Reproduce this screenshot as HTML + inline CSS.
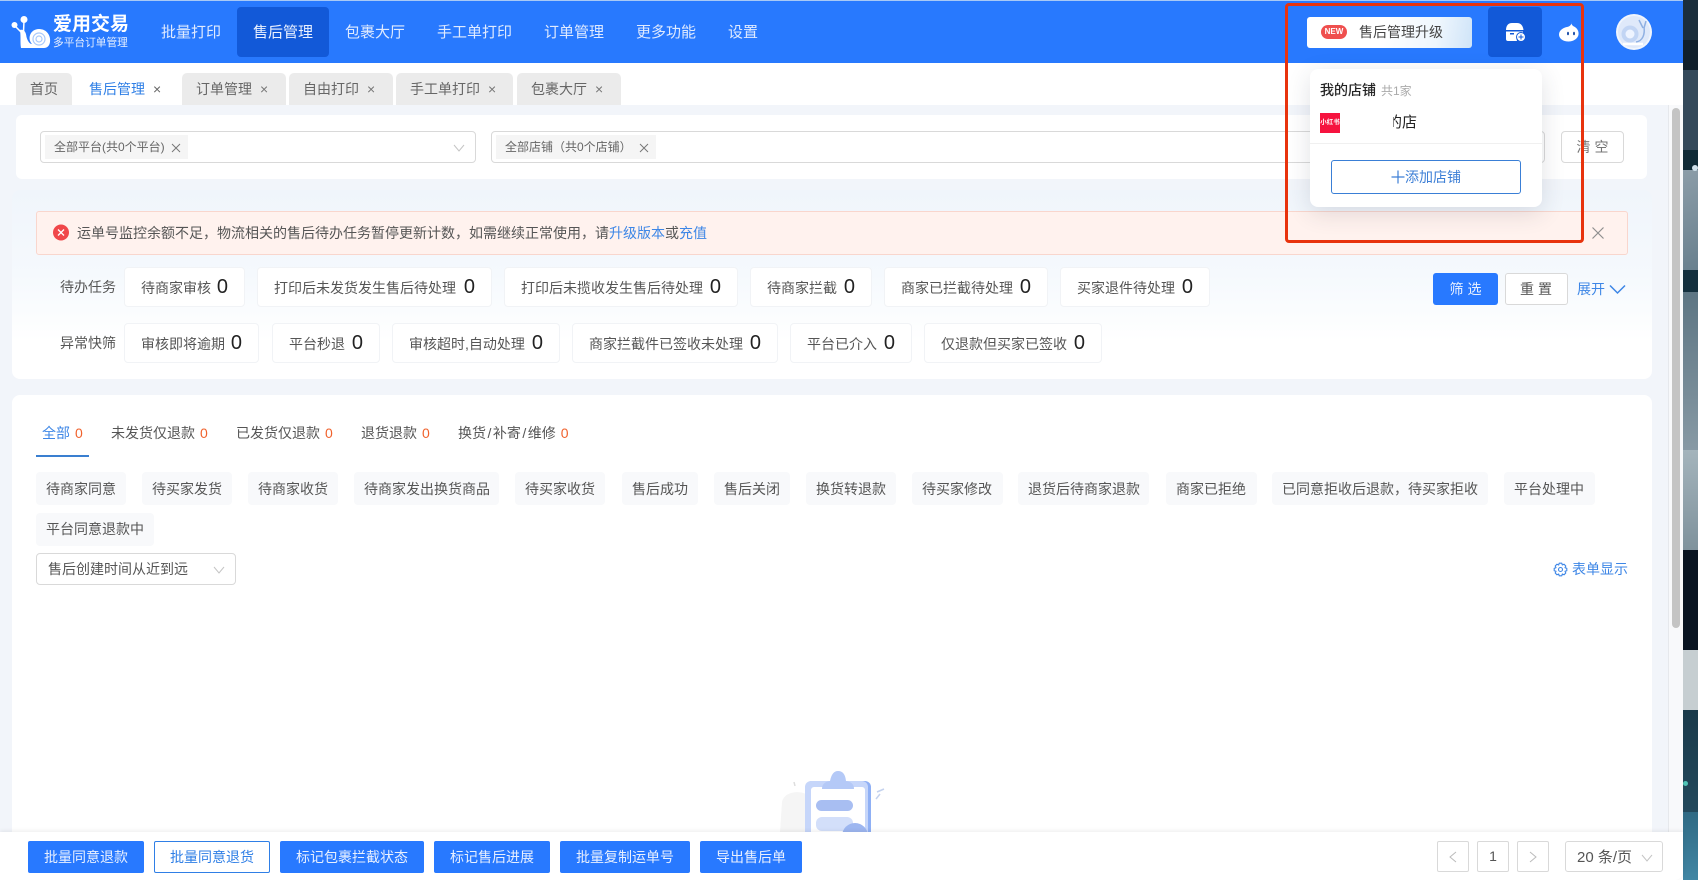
<!DOCTYPE html>
<html lang="zh"><head><meta charset="utf-8"><title>售后管理</title>
<style>
*{box-sizing:border-box}
html,body{margin:0;padding:0;width:1698px;height:880px;overflow:hidden;background:#fff;font-family:"Liberation Sans","Noto Sans CJK SC",sans-serif;font-size:14px;color:#555}
.a,.b,.tab,.chip,.c,.btn,.sel,.pg{position:absolute;white-space:nowrap}
.nav{position:absolute;top:8px;height:50px;line-height:50px;font-size:15px;color:#dfeaff;white-space:nowrap}
.tab{top:73px;height:32px;line-height:32px;background:#ebebeb;border-radius:5px 5px 0 0;color:#666;padding-left:14px;font-size:14px}
.tab i{position:absolute;top:0;font-style:normal;font-size:14px;color:#777}
.sel{background:#fff;border:1px solid #d9d9d9;border-radius:4px}
.tag{position:absolute;top:3px;height:24px;line-height:24px;background:#f5f5f5;font-size:12px;color:#666;padding-left:9px}
.tag svg{position:absolute;top:8px}
.c{height:40px;background:#fff;border:1px solid #f1f3f6;border-radius:4px;line-height:41px;padding-left:16px;font-size:14px;color:#555}
.c b{position:absolute;right:16px;top:0;font-weight:400;font-size:20px;color:#222;line-height:38px}
.r2{line-height:41px}
.lbl{position:absolute;left:60px;color:#555;font-size:14px;line-height:20px}
.st{position:absolute;top:423px;line-height:20px;font-size:14px;color:#555;white-space:nowrap}
.st u{text-decoration:none;color:#f0622d;margin-left:5px}
.st s{text-decoration:none;margin:0 1.500px}
.chip{height:33px;line-height:35px;background:#f8f9fb;border-radius:4px;padding-left:10px;font-size:14px;color:#555}
.btn{top:841px;height:32px;line-height:32px;text-align:center;background:#2879ff;color:#e8f0ff;border-radius:2px;font-size:14px}
.pg{top:841px;height:31px;border:1px solid #d9d9d9;border-radius:2px;background:#fff;text-align:center;line-height:29px;color:#555}
.w{position:absolute;left:1683px;width:15px}
</style></head><body>

<!-- wallpaper -->
<div class="w" style="top:0;height:40px;background:#1b2e3c"></div>
<div class="w" style="top:40px;height:30px;background:#101f2b"></div>
<div class="w" style="top:70px;height:80px;background:#34495a"></div>
<div class="w" style="top:150px;height:20px;background:#0f2a36"></div>
<div class="w" style="top:170px;height:100px;background:linear-gradient(160deg,#8c9da8,#69808e)"></div>
<div class="w" style="top:270px;height:22px;background:#14303e"></div>
<div class="w" style="top:292px;height:158px;background:linear-gradient(#5d7583,#8799a4)"></div>
<div class="w" style="top:450px;height:100px;background:linear-gradient(#a4b4bc,#7f929c)"></div>
<div class="w" style="top:550px;height:100px;background:#0a1522"></div>
<div class="w" style="top:650px;height:60px;background:#c6ced1"></div>
<div class="w" style="top:710px;height:102px;background:linear-gradient(#1a3a4a,#23495c)"></div>
<div class="w" style="top:812px;height:68px;background:linear-gradient(#2f6a84,#4186a4)"></div>
<div class="a" style="left:1683px;top:781px;width:5px;height:5px;border-radius:50%;background:#4fc3b5"></div>
<div class="a" style="left:1692px;top:165px;width:6px;height:6px;border-radius:50%;background:#cfe0ea"></div>

<!-- app bg -->
<div class="a" style="left:0;top:0;width:1683px;height:880px;background:#fff;border-radius:0 0 8px 0"></div>
<div class="a" style="left:0;top:105px;width:1668px;height:727px;background:#f2f5fa"></div>
<div class="a" style="left:1668px;top:105px;width:1px;height:727px;background:#e6e8ec"></div>
<div class="a" style="left:1669px;top:105px;width:14px;height:727px;background:#f8f9fb"></div>
<div class="a" style="left:1672px;top:108px;width:8px;height:520px;background:#c4c4c4;border-radius:4px"></div>

<!-- header -->
<div class="a" style="left:0;top:0;width:1683px;height:1px;background:#a9c9f5"></div>
<div class="a" style="left:0;top:1px;width:1683px;height:62px;background:#2879fe"></div>
<svg class="a" style="left:11px;top:15px" width="42" height="36" viewBox="0 0 42 36">
<circle cx="3.500" cy="10" r="3" fill="#fff"/><circle cx="13" cy="4.500" r="3.500" fill="#fff"/>
<path d="M4 11 L10 17 M13 6 L12.500 17" stroke="#fff" stroke-width="1.500" fill="none"/>
<path d="M9 15 C13 14 15 17 15.500 22 C17 27 19 29 21 29 C16 24 19 14 28 14 C36 14 40 21 39 27 C38.500 31 36 33 33 33 L10 33 C9 28 10 22 9 15Z" fill="#fff"/>
<circle cx="28" cy="24" r="6" fill="#fff" stroke="#a9c9fa" stroke-width="1.200"/><circle cx="28" cy="24" r="3" fill="none" stroke="#a9c9fa" stroke-width="1.200"/>
</svg>
<div class="a" style="left:53px;top:14px;font-size:19px;font-weight:700;color:#fff;line-height:22px;white-space:nowrap">爱用交易</div>
<div class="a" style="left:53px;top:36px;font-size:10.700px;color:#e6efff;line-height:14px;white-space:nowrap">多平台订单管理</div>
<div class="a" style="left:237px;top:7px;width:92px;height:50px;background:#1259d8;border-radius:4px"></div>
<div class="nav" style="left:161px">批量打印</div>
<div class="nav" style="left:253px;color:#eaf1ff">售后管理</div>
<div class="nav" style="left:345px">包裹大厅</div>
<div class="nav" style="left:437px">手工单打印</div>
<div class="nav" style="left:544px">订单管理</div>
<div class="nav" style="left:636px">更多功能</div>
<div class="nav" style="left:728px">设置</div>

<div class="a" style="left:1307px;top:17px;width:165px;height:31px;border-radius:3px;background:linear-gradient(100deg,#fff 0%,#fff 45%,#eef6fd 78%,#cfe4f8 100%)"></div>
<div class="a" style="left:1321px;top:25px;width:26px;height:14px;border-radius:7px;background:#ef4f4e;color:#fff;font-size:8px;font-weight:700;line-height:14px;text-align:center">NEW</div>
<div class="a" style="left:1359px;top:22px;font-size:14px;line-height:20px;color:#444;white-space:nowrap">售后管理升级</div>
<div class="a" style="left:1488px;top:7px;width:54px;height:50px;background:#1259d8;border-radius:4px"></div>
<svg class="a" style="left:1505px;top:22px" width="22" height="21" viewBox="0 0 22 21">
<path d="M1 8 C1 4 3 1 7 1 H12 C16 1 18 4 18.500 8Z" fill="#fff"/><path d="M1 9.500 H18 V11 A6 6 0 0 0 12 19 H3 Q1 19 1 17Z" fill="#fff"/>
<rect x="5" y="11" width="4" height="1.500" fill="#1259d8"/>
<circle cx="16" cy="15" r="4.500" fill="#fff" stroke="#1259d8"/><path d="M16 12.500 V17.500 M13.500 15 H18.500" stroke="#1259d8"/>
</svg>
<svg class="a" style="left:1559px;top:22px" width="20" height="20" viewBox="0 0 20 20">
<path d="M13 0 C12 2 13 3.500 15 4.500 C18 6 20 9 19.500 12.500 C19 16.500 14.500 19.500 9.500 19.500 C4 19.500 0 16.500 0 12.500 C0 8 5 5.500 8 5 C11 4.500 12.500 2.500 13 0Z" fill="#fff"/>
<ellipse cx="9" cy="11.500" rx="1" ry="1.800" fill="#1d4fa8"/><ellipse cx="15" cy="11.500" rx="1" ry="1.800" fill="#1d4fa8"/>
</svg>
<svg class="a" style="left:1616px;top:14px" width="36" height="36" viewBox="0 0 36 36">
<circle cx="18" cy="18" r="18" fill="#f0f5fd"/><circle cx="18" cy="18" r="16" fill="#dfe9fa"/><circle cx="14" cy="20" r="8.500" fill="#c2d5f4"/><circle cx="14" cy="20" r="4.500" fill="#eef4ff"/>
<path d="M20 28 C27 27 29 20 28 13 M23 6 L27 14 M30 7 L28 14" stroke="#8fb0e2" stroke-width="1.500" fill="none"/>
<path d="M7 30 H27" stroke="#fff" stroke-width="2.500"/>
</svg>

<!-- tabs -->
<div class="tab" style="left:16px;width:56px">首页</div>
<div class="tab" style="left:75px;width:104px;background:#fff;color:#2f7fe6">售后管理<i style="left:78px;color:#666">×</i></div>
<div class="tab" style="left:182px;width:104px">订单管理<i style="left:78px">×</i></div>
<div class="tab" style="left:289px;width:104px">自由打印<i style="left:78px">×</i></div>
<div class="tab" style="left:396px;width:117px">手工单打印<i style="left:92px">×</i></div>
<div class="tab" style="left:517px;width:104px">包裹大厅<i style="left:78px">×</i></div>

<!-- filter -->
<div class="a" style="left:16px;top:115px;width:1631px;height:64px;background:#fff;border-radius:6px"></div>
<div class="sel" style="left:40px;top:131px;width:436px;height:32px">
 <div class="tag" style="left:4px;width:143px">全部平台(共0个平台)<svg style="left:126px" width="10" height="10"><path d="M1 1 L9 9 M9 1 L1 9" stroke="#777"/></svg></div>
 <svg class="a" style="left:412px;top:12px" width="12" height="8"><path d="M1 1 L6 7 L11 1" fill="none" stroke="#c4c4c4"/></svg>
</div>
<div class="sel" style="left:491px;top:131px;width:1054px;height:32px">
 <div class="tag" style="left:4px;width:160px">全部店铺（共0个店铺）<svg style="left:143px" width="10" height="10"><path d="M1 1 L9 9 M9 1 L1 9" stroke="#777"/></svg></div>
</div>
<div class="sel" style="left:1561px;top:131px;width:63px;height:32px;text-align:center;line-height:30px;color:#777;letter-spacing:4px;padding-left:4px">清空</div>

<!-- summary card -->
<div class="a" style="left:12px;top:190px;width:1640px;height:189px;border-radius:8px;background:linear-gradient(#f0f5fb,#f5f9fd 45%,#fff 80%)"></div>
<div class="a" style="left:36px;top:211px;width:1592px;height:44px;background:#fff2ee;border:1px solid #f9d6cd;border-radius:3px"></div>
<svg class="a" style="left:53px;top:224px" width="16" height="17"><circle cx="8" cy="8.500" r="8" fill="#f0474a"/><path d="M5 5.500 L11 11.500 M11 5.500 L5 11.500" stroke="#fff" stroke-width="1.300"/></svg>
<div class="a" style="left:77px;top:223px;line-height:20px;color:#555;white-space:nowrap">运单号监控余额不足，物流相关的售后待办任务暂停更新计数，如需继续正常使用，请<span style="color:#3d86e6">升级版本</span>或<span style="color:#3d86e6">充值</span></div>
<svg class="a" style="left:1591px;top:226px" width="14" height="14"><path d="M1.500 1.500 L12.500 12.500 M12.500 1.500 L1.500 12.500" stroke="#8f8f8f" stroke-width="1.200"/></svg>

<div class="lbl" style="top:277px">待办任务</div>
<div class="c" style="left:124px;top:267px;width:121px">待商家审核<b>0</b></div>
<div class="c" style="left:257px;top:267px;width:235px">打印后未发货发生售后待处理<b>0</b></div>
<div class="c" style="left:504px;top:267px;width:234px">打印后未揽收发生售后待处理<b>0</b></div>
<div class="c" style="left:750px;top:267px;width:122px">待商家拦截<b>0</b></div>
<div class="c" style="left:884px;top:267px;width:164px">商家已拦截待处理<b>0</b></div>
<div class="c" style="left:1060px;top:267px;width:150px">买家退件待处理<b>0</b></div>

<div class="a" style="left:1433px;top:273px;width:65px;height:32px;background:#2879ff;border-radius:3px;color:#e8f0ff;text-align:center;line-height:32px;letter-spacing:4px;padding-left:4px">筛选</div>
<div class="a" style="left:1505px;top:273px;width:63px;height:32px;background:#fff;border:1px solid #d9d9d9;border-radius:3px;color:#555;text-align:center;line-height:30px;letter-spacing:4px;padding-left:3px">重置</div>
<div class="a" style="left:1577px;top:279px;line-height:20px;color:#3d86e6;white-space:nowrap">展开</div>
<svg class="a" style="left:1609px;top:284px" width="17" height="11"><path d="M1 1.500 L8.500 9 L16 1.500" fill="none" stroke="#3d86e6" stroke-width="1.500"/></svg>

<div class="lbl" style="top:333px">异常快筛</div>
<div class="c r2" style="left:124px;top:323px;width:135px">审核即将逾期<b>0</b></div>
<div class="c r2" style="left:272px;top:323px;width:108px">平台秒退<b>0</b></div>
<div class="c r2" style="left:392px;top:323px;width:168px">审核超时,自动处理<b>0</b></div>
<div class="c r2" style="left:572px;top:323px;width:206px">商家拦截件已签收未处理<b>0</b></div>
<div class="c r2" style="left:790px;top:323px;width:122px">平台已介入<b>0</b></div>
<div class="c r2" style="left:924px;top:323px;width:178px">仅退款但买家已签收<b>0</b></div>

<!-- list card -->
<div class="a" style="left:12px;top:395px;width:1640px;height:440px;background:#fff;border-radius:8px 8px 0 0"></div>
<div class="st" style="left:42px;color:#3d86e6">全部<u>0</u></div>
<div class="st" style="left:111px">未发货仅退款<u>0</u></div>
<div class="st" style="left:236px">已发货仅退款<u>0</u></div>
<div class="st" style="left:361px">退货退款<u>0</u></div>
<div class="st" style="left:458px">换货<s>/</s>补寄<s>/</s>维修<u>0</u></div>
<div class="a" style="left:36px;top:455px;width:53px;height:2px;background:#3a7fd0"></div>

<div class="chip" style="left:36px;top:472px;width:90px">待商家同意</div>
<div class="chip" style="left:142px;top:472px;width:90px">待买家发货</div>
<div class="chip" style="left:248px;top:472px;width:90px">待商家收货</div>
<div class="chip" style="left:354px;top:472px;width:145px">待商家发出换货商品</div>
<div class="chip" style="left:515px;top:472px;width:90px">待买家收货</div>
<div class="chip" style="left:622px;top:472px;width:76px">售后成功</div>
<div class="chip" style="left:714px;top:472px;width:76px">售后关闭</div>
<div class="chip" style="left:806px;top:472px;width:90px">换货转退款</div>
<div class="chip" style="left:912px;top:472px;width:91px">待买家修改</div>
<div class="chip" style="left:1018px;top:472px;width:131px">退货后待商家退款</div>
<div class="chip" style="left:1166px;top:472px;width:91px">商家已拒绝</div>
<div class="chip" style="left:1272px;top:472px;width:216px">已同意拒收后退款，待买家拒收</div>
<div class="chip" style="left:1504px;top:472px;width:91px">平台处理中</div>
<div class="chip" style="left:36px;top:513px;width:118px;line-height:33px">平台同意退款中</div>

<div class="sel" style="left:36px;top:553px;width:200px;height:32px;line-height:30px;padding-left:11px;color:#555">售后创建时间从近到远
 <svg class="a" style="left:176px;top:12px" width="12" height="8"><path d="M1 1 L6 7 L11 1" fill="none" stroke="#c4c4c4"/></svg>
</div>
<svg class="a" style="left:1553px;top:562px" width="15" height="15" viewBox="0 0 15 15"><circle cx="7.500" cy="7.500" r="2" fill="none" stroke="#3d86e6" stroke-width="1.100"/><path d="M6.200 1.200 H8.800 L9.300 3 L11 2.200 L12.800 4 L12 5.700 L13.800 6.300 V8.700 L12 9.300 L12.800 11 L11 12.800 L9.300 12 L8.800 13.800 H6.200 L5.700 12 L4 12.800 L2.200 11 L3 9.300 L1.200 8.700 V6.300 L3 5.700 L2.200 4 L4 2.200 L5.700 3Z" fill="none" stroke="#3d86e6" stroke-width="1.100" stroke-linejoin="round"/></svg>
<div class="a" style="left:1572px;top:559px;line-height:20px;color:#3d86e6;white-space:nowrap">表单显示</div>

<!-- empty illustration -->
<svg class="a" style="left:770px;top:760px" width="120" height="75" viewBox="0 0 120 75">
<path d="M12 42 C14 32 28 30 36 34 V72 H10Z" fill="#f5f5f5"/>
<rect x="36" y="21" width="65" height="60" rx="6" fill="#8fb0f5"/>
<rect x="35" y="21" width="63" height="60" rx="6" fill="#c6d6fa"/>
<rect x="41" y="27" width="54" height="50" rx="3" fill="#fff"/>
<path d="M52 29 Q52 22 60 21 Q62 11 68 11 Q75 11 76 21 Q84 22 84 29Z" fill="#b4c9f7"/>
<rect x="46" y="40" width="37" height="11" rx="5.500" fill="#a8bef2"/>
<rect x="46" y="57" width="37" height="14" rx="6" fill="#d3dffa"/>
<circle cx="85" cy="76" r="13" fill="#9db6f0"/>
<path d="M107 32 L114 29 M106 39 L110 34" stroke="#c4d2ee" stroke-width="1.500"/>
<path d="M24 22 L25 26" stroke="#ddd" stroke-width="1.500"/>
</svg>

<!-- bottom bar -->
<div class="a" style="left:0;top:832px;width:1683px;height:48px;background:#fff;box-shadow:0 -1px 4px rgba(0,0,0,.08);border-radius:0 0 8px 0"></div>
<div class="btn" style="left:28px;width:116px">批量同意退款</div>
<div class="btn" style="left:154px;width:116px;background:#fff;border:1px solid #2f7fe6;color:#2f7fe6;line-height:30px">批量同意退货</div>
<div class="btn" style="left:280px;width:144px">标记包裹拦截状态</div>
<div class="btn" style="left:434px;width:116px">标记售后进展</div>
<div class="btn" style="left:560px;width:130px">批量复制运单号</div>
<div class="btn" style="left:700px;width:102px">导出售后单</div>
<div class="pg" style="left:1437px;width:32px"><svg width="8" height="12" style="margin-top:9px"><path d="M7 1 L1 6 L7 11" fill="none" stroke="#bbb"/></svg></div>
<div class="pg" style="left:1477px;width:32px">1</div>
<div class="pg" style="left:1517px;width:32px"><svg width="8" height="12" style="margin-top:9px"><path d="M1 1 L7 6 L1 11" fill="none" stroke="#bbb"/></svg></div>
<div class="pg" style="left:1565px;width:98px;text-align:left;padding-left:11px;border-radius:3px;font-size:15px;line-height:31px">20 条/页
 <svg class="a" style="left:75px;top:12px" width="12" height="8"><path d="M1 1 L6 7 L11 1" fill="none" stroke="#c4c4c4"/></svg>
</div>

<!-- popover -->
<div class="a" style="left:1310px;top:69px;width:232px;height:138px;background:#fff;border-radius:8px;box-shadow:0 6px 24px rgba(40,50,70,.14)"></div>
<div class="a" style="left:1320px;top:80px;font-size:14px;line-height:20px;color:#222;text-shadow:0 0 .5px #222;white-space:nowrap">我的店铺</div>
<div class="a" style="left:1381px;top:82px;font-size:12px;line-height:18px;color:#aaa;white-space:nowrap">共1家</div>
<div class="a" style="left:1320px;top:113px;width:20px;height:20px;background:#f6133f;color:#fff;font-size:6.500px;font-weight:700;line-height:20px;text-align:center;white-space:nowrap;overflow:hidden">小红书</div>
<div class="a" style="left:1387px;top:113px;font-size:15px;line-height:20px;color:#222;white-space:nowrap">的店</div>
<div class="a" style="left:1384px;top:110px;width:9px;height:26px;background:#fff"></div>
<div class="a" style="left:1310px;top:143px;width:232px;height:1px;background:#f0f0f0"></div>
<div class="a" style="left:1331px;top:160px;width:190px;height:34px;border:1px solid #3a7fd6;border-radius:3px"></div>
<svg class="a" style="left:1391px;top:170px" width="14" height="14"><path d="M7 .5 V13.500 M.5 7 H13.500" stroke="#3d7fd6" stroke-width="1.200"/></svg>
<div class="a" style="left:1405px;top:167px;line-height:20px;color:#3d7fd6;font-size:14px;white-space:nowrap">添加店铺</div>

<!-- red highlight -->
<div class="a" style="left:1285px;top:3px;width:299px;height:240px;border:3px solid #e8330d;border-radius:4px"></div>
</body></html>
